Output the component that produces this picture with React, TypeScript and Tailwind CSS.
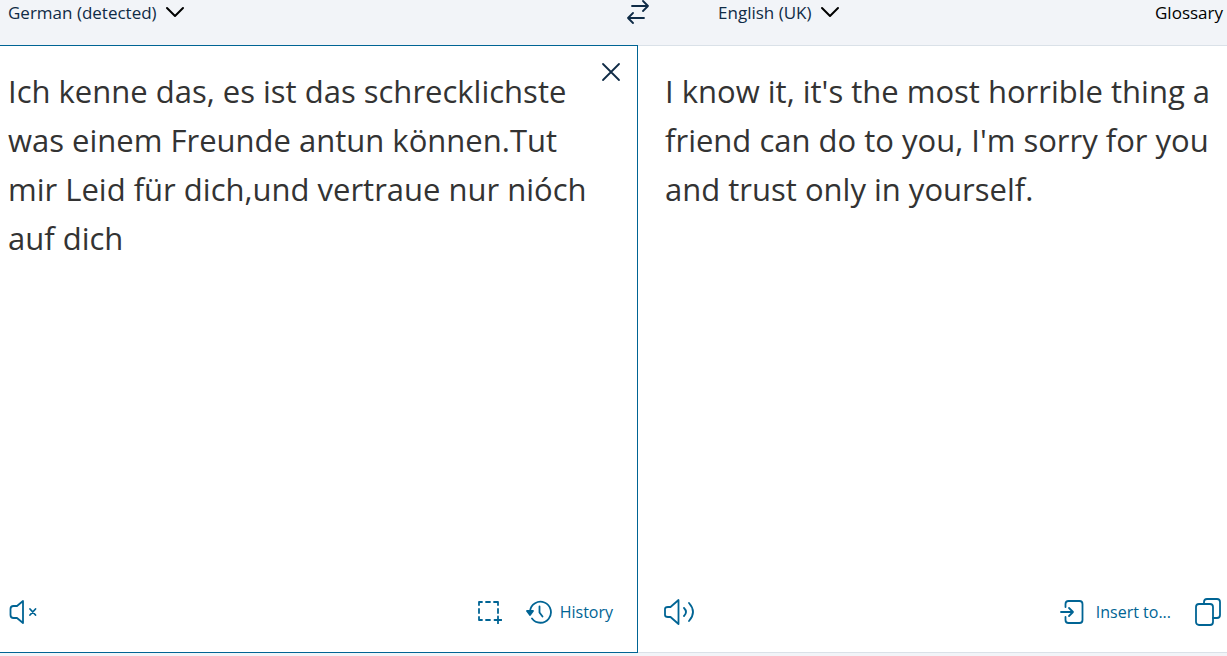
import type { ReactNode } from "react";

const sourceText =
  "Ich kenne das, es ist das schrecklichste was einem Freunde antun können.Tut mir Leid für dich,und vertraue nur nióch auf dich";
const targetText =
  "I know it, it's the most horrible thing a friend can do to you, I'm sorry for you and trust only in yourself.";

type IconProps = { width: number; height: number; strokeWidth?: number; children: ReactNode };

function Icon({ width, height, strokeWidth = 1.8, children }: IconProps) {
  return (
    <svg
      className="shrink-0"
      width={width}
      height={height}
      viewBox={`0 0 ${width} ${height}`}
      fill="none"
      stroke="currentColor"
      strokeWidth={strokeWidth}
      strokeLinecap="round"
      strokeLinejoin="round"
      aria-hidden="true"
    >
      {children}
    </svg>
  );
}

function LanguageButton({ label }: { label: string }) {
  return (
    <button type="button" className="flex items-center gap-2 font-medium text-[#0f2b46]">
      {label}
      <span className="text-black">
        <Icon width={20} height={14} strokeWidth={2}>
          <path d="M2 2l8 8 8-8" />
        </Icon>
      </span>
    </button>
  );
}

export default function App() {
  return (
    <div className="flex min-h-screen flex-col bg-[#f2f4f8] font-['Open_Sans','Noto_Sans',sans-serif]">
      <header className="grid grid-cols-[52fr_48fr] pb-[19px] text-[17px] leading-[26px]">
        <div className="flex items-center justify-between pl-2">
          <LanguageButton label="German (detected)" />
          <button type="button" aria-label="Swap languages" className="-mr-3 text-[#0f2b46]">
            <Icon width={24} height={26}>
              <path d="M6 6h16M17 1l5 5-5 5M18 18H2M7 13l-5 5 5 5" />
            </Icon>
          </button>
        </div>
        <div className="flex items-center justify-between pr-1 pl-20">
          <LanguageButton label="English (UK)" />
          <button type="button" className="font-medium text-black">
            Glossary
          </button>
        </div>
      </header>

      <main className="mb-[3px] grid flex-1 grid-cols-[52fr_48fr] bg-white">
        <section className="flex min-w-0 flex-col border-y border-r border-[#006494]">
          <div className="flex flex-1 items-start">
            <textarea
              aria-label="Source text"
              defaultValue={sourceText}
              className="min-w-0 flex-1 resize-none self-stretch overflow-hidden pt-[21px] pr-2 pl-2 text-[31px] leading-[49px] text-[#333] outline-none"
            />
            <button type="button" aria-label="Clear text" className="mt-4 mr-4 text-[#0f2b46]">
              <Icon width={20} height={20}>
                <path d="M2 2l16 16M18 2L2 18" />
              </Icon>
            </button>
          </div>
          <div className="flex items-center justify-between pr-6 pb-6 pl-2 text-[#006494]">
            <button type="button" aria-label="Speech unavailable">
              <Icon width={30} height={32}>
                <path d="M15 5v22l-6-5H5.500q-3 0-3-3v-6q0-3 3-3H9z" />
                <path d="M22 13l5.500 6M27.500 13l-5.500 6" />
              </Icon>
            </button>
            <div className="flex items-center gap-6">
              <button type="button" aria-label="Select area">
                <Icon width={24} height={24}>
                  <path d="M1 5V2h3M8 2h4M16 2h4v3M20 9v4M1 9v4M1 17v3h3M8 20h4M20 16.500v7M16.500 20h7" />
                </Icon>
              </button>
              <button type="button" className="flex items-center gap-2 text-base leading-8">
                <Icon width={26} height={24}>
                  <path d="M4 11A10.500 10.500 0 1 1 6 18.500" />
                  <path d="M13.500 6.500v6l3 4" />
                  <path d="M1 11h6l-3 4z" fill="currentColor" />
                </Icon>
                History
              </button>
            </div>
          </div>
        </section>

        <section className="flex min-w-0 flex-col border-y border-[#dae1e8]">
          <textarea
            readOnly
            aria-label="Translation"
            value={targetText}
            className="w-full flex-1 resize-none overflow-hidden pt-[21px] pr-3 pl-[27px] text-[31px] leading-[49px] text-[#333] outline-none"
          />
          <div className="flex items-center justify-between pr-1.5 pb-6 pl-6 text-[#006494]">
            <button type="button" aria-label="Listen">
              <Icon width={34} height={32}>
                <path d="M16.500 4v24l-8-7H6q-3 0-3-2v-6q0-2 3-2h2.500z" />
                <path d="M22 12q4 4 0 8M27 7q8 9 0 18" />
              </Icon>
            </button>
            <div className="flex items-center gap-6">
              <button type="button" className="flex items-center gap-3 text-base leading-8">
                <Icon width={24} height={24}>
                  <path d="M5.500 7V4q0-3 3-3h11q3 0 3 3v16q0 3-3 3h-11q-3 0-3-3v-3" />
                  <path d="M1 12h12M9 8l4 4-4 4" />
                </Icon>
                Insert to...
              </button>
              <button type="button" aria-label="Copy">
                <Icon width={26} height={28}>
                  <rect x="1" y="6" width="17" height="21" rx="3" />
                  <path d="M9 6V4q0-3 3-3h10q3 0 3 3v13q0 3-3 3h-4" />
                </Icon>
              </button>
            </div>
          </div>
        </section>
      </main>
    </div>
  );
}
